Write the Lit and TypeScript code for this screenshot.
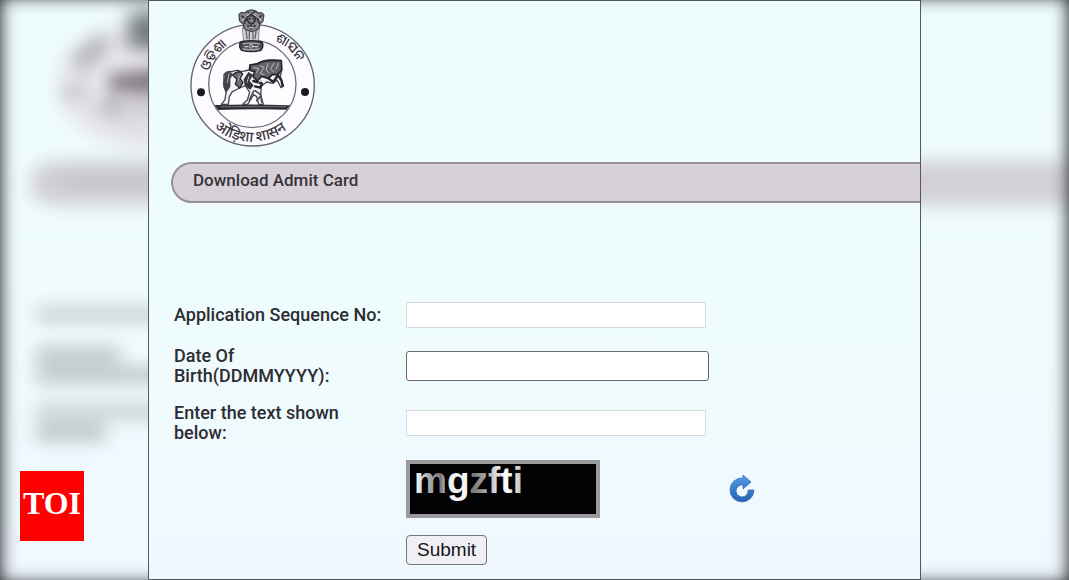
import { LitElement, html, svg, css } from "lit";
import { customElement } from "lit/decorators.js";

@customElement("state-emblem")
class StateEmblem extends LitElement {
  static styles = css`
    :host { display: block; width: 126px; height: 140px; }
    svg { display: block; width: 100%; height: 100%; }
    .seal { font: 500 40px "Noto Sans", "Noto Sans Devanagari", "Noto Sans Oriya", sans-serif; fill: #3a3740; }
    .hindi { font-size: 44px; }
  `;
  render() {
    return html`<svg viewBox="30 27 378 420" role="img" aria-label="Government of Odisha emblem">
      ${svg`
      <defs>
        <path id="arcLeft" d="M86 214 A142 142 0 0 1 153 130" />
        <path id="arcRight" d="M284 122 A150 150 0 0 1 366 211" />
        <path id="arcBottom" d="M94 376 A172 172 0 0 0 330 380" />
      </defs>
      <ellipse cx="218" cy="256" rx="185" ry="182" fill="#fdfbff" stroke="#66636b" stroke-width="4"/>
      <circle cx="217" cy="252" r="131" fill="#fdfcff" stroke="#706e76" stroke-width="4"/>
      <circle cx="63" cy="277" r="12" fill="#1c1a20"/>
      <circle cx="375" cy="276" r="12" fill="#1c1a20"/>
      <text class="seal"><textPath href="#arcLeft">ଓଡ଼ିଶା</textPath></text>
      <text class="seal"><textPath href="#arcRight">ଶାସନ</textPath></text>
      <text class="seal hindi" text-anchor="middle"><textPath href="#arcBottom" startOffset="50%">ओड़िशा शासन</textPath></text>
      <g stroke-linejoin="round" stroke-linecap="round">
        <path d="M188 82 L238 82 L235 126 L192 126 Z" fill="#d2d0d7" stroke="#8b8891" stroke-width="3"/>
        <path d="M178 52 Q174 38 188 38 Q198 40 200 34 Q214 25 229 34 Q232 41 242 38 Q256 42 249 54 Q252 66 240 70 Q240 88 226 92 Q213 96 203 91 Q190 88 190 71 Q176 66 178 52Z" fill="#8a878f" stroke="#46434c" stroke-width="4"/>
        <path d="M204 36 L213 45 L224 35 M185 48 L198 58 L193 70 M244 47 L232 58 L238 70 M202 51 Q214 42 227 52 Q226 68 214 72 Q201 67 202 51 M208 56h3 M219 56h3 M203 77 Q214 87 226 77 M213 74v12" fill="none" stroke="#36333b" stroke-width="5"/>
        <path d="M198 88 L201 116 M229 88 L225 116 M208 97 V117 M219 97 V117" fill="none" stroke="#66636c" stroke-width="4"/>
        <path d="M201 47 L209 40 M221 42 L228 48 M186 61 L194 54 M234 51 L243 60 M208 82h12" fill="none" stroke="#d8d6dc" stroke-width="3"/>
        <path d="M181 126 Q213 118 246 126 Q253 138 243 151 Q214 159 185 151 Q175 140 181 126Z" fill="#4b4851" stroke="#28252d" stroke-width="4"/>
        <path d="M190 132 Q213 127 238 132 M189 147 Q214 152 237 147" fill="none" stroke="#aaa8ae" stroke-width="4"/>
        <circle cx="214" cy="139" r="6" fill="#77737d" stroke="#e1dfe4" stroke-width="2"/>
        <path d="M194 140h10 M224 140h10" stroke="#d1ced5" stroke-width="4"/>
      </g>
      <path d="M104 315 Q218 311 330 316 L324 323 L320 329 Q220 326 114 330Z" fill="#302d34"/>
      <path d="M122 320 H318" stroke="#9b98a0" stroke-width="2"/>
      <g stroke-linejoin="round" stroke-linecap="round">
        <path d="M132 224 Q140 212 157 215 Q171 207 184 215 L207 210 L210 195 L231 191 Q252 178 276 180 L304 182 L305 210 L301 230 L310 258 L303 263 L291 240 L279 250 L260 246 L244 259 L242 284 L250 313 L236 313 L230 290 L221 284 L203 313 L188 313 L202 300 L209 277 L196 257 L179 264 L157 275 L148 290 L145 313 L124 313 L135 299 L139 273 L131 255Z" fill="#f5f3f8" stroke="#4a4750" stroke-width="4"/>
        <path d="M134 223 Q147 209 159 222 L151 237 L151 260 L138 280 L130 262Z" fill="#45424a"/>
        <path d="M158 225 Q177 207 188 222 L180 235 L189 247 L179 264 L166 253 L171 238Z" fill="#716e77" stroke="#27242b" stroke-width="4"/>
        <path d="M191 238 L205 216 L219 224 L209 243 L221 256 L211 269 L194 257Z" fill="#37343c"/>
        <path d="M210 195 L231 192 Q251 178 304 182 L305 210 L293 225 L278 223 L265 235 L245 229 L232 243 L219 230 L224 214 L210 211Z" fill="#65616b" stroke="#27242b" stroke-width="5"/>
        <path d="M220 243 L246 250 L240 263 L225 259 M292 224 L304 240 L308 258 M265 235 L280 246 L292 228" fill="none" stroke="#27242b" stroke-width="7"/>
        <path d="M225 272 L242 284 L245 306 M221 273 L208 300 M240 290 L230 302" fill="none" stroke="#4a4750" stroke-width="5"/>
        <path d="M220 203 L236 205 L229 219 M242 198 L252 202 L241 220 L252 224 M264 190 L258 210 L267 219 M282 190 L272 207 L281 216 M295 190 L288 208 M181 225 L174 240 M207 229 L201 247 M147 222 L142 247 M235 247 L246 241" fill="none" stroke="#b9b6be" stroke-width="3"/>
      </g>`}
    </svg>`;
  }
}

@customElement("page-backdrop")
class PageBackdrop extends LitElement {
  static styles = css`
    :host { display: block; overflow: hidden; background: #101416; }
    svg { display: block; width: 100%; height: 100%; filter: blur(9px); overflow: visible; }
  `;
  render() {
    return html`<svg viewBox="0 0 1069 580" preserveAspectRatio="none" aria-hidden="true">
      ${svg`
      <defs><linearGradient id="sky" x2="0" y2="1"><stop offset="0" stop-color="#effcfd"/><stop offset=".6" stop-color="#effbfd"/><stop offset="1" stop-color="#f0f8ff"/></linearGradient></defs>
      <rect y="-4" width="1069" height="588" fill="url(#sky)"/>
      <ellipse cx="145" cy="85" rx="85" ry="60" fill="#eeebf0" stroke="#bbbabf" stroke-width="2"/>
      <ellipse cx="145" cy="84" rx="60" ry="43" fill="#f4f2f6" stroke="#918f95" stroke-width="3"/>
      <path d="M75 64 L104 40" stroke="#aaa7ad" stroke-width="13"/>
      <circle cx="72" cy="92" r="7" fill="#aaa7ad"/>
      <path d="M105 74 L150 70 L185 62 V84 L145 95 L110 88Z" fill="#756f76"/>
      <path d="M104 108 H190 M116 90 L106 108" stroke="#777279" stroke-width="5"/>
      <rect x="129" y="12" width="34" height="38" fill="#757b7d"/>
      <path d="M1069 163 H60 Q32 163 32 183 Q32 203 60 203 H1069Z" fill="#d3d0d5" stroke="#b5b1b5" stroke-width="2"/>
      <g fill="#85878a" opacity=".55">
        <rect x="62" y="175" width="225" height="13" opacity=".35"/>
        <rect x="36" y="308" width="293" height="13" opacity=".8"/>
        <rect x="36" y="348" width="84" height="14"/><rect x="36" y="368" width="214" height="14"/>
        <rect x="36" y="405" width="232" height="13" opacity=".8"/><rect x="36" y="425" width="70" height="15"/>
      </g>`}
    </svg>`;
  }
}

@customElement("app-root")
class AppRoot extends LitElement {
  static styles = css`
    :host { display: block; font-family: Roboto, "Liberation Sans", sans-serif; color: #2d2c33; }
    * { box-sizing: border-box; }
    .stage { position: relative; display: grid; grid-template-columns: 148fr minmax(600px, 773fr) 148fr; min-height: 100vh; }
    .backdrop { position: absolute; inset: 0; }
    .panel { position: relative; grid-column: 2; border: 1px solid #50595d; padding: 8px 0 12px 22px; background: linear-gradient(#effcfd, #effcfd 55%, #f0f8ff); }
    .emblem { margin: 0 0 13px 19px; }
    .title { margin: 0; height: 41px; padding: 0 20px; border: 2px solid #969196; border-right: 0; border-radius: 21px 0 0 21px; background: #d7d1d7; font-size: 17px; font-weight: 500; line-height: 33px; color: #36343a; }
    .form { display: grid; grid-template-columns: 232px minmax(0, 1fr); grid-auto-rows: minmax(28px, auto); row-gap: 17px; align-items: center; margin: 98px 0 0 3px; font-size: 18px; font-weight: 500; line-height: 20px; }
    .label { max-width: 220px; }
    .field { width: 300px; height: 26px; border: 1px solid #d5dadb; background: #fff; font: 400 17px "Liberation Sans", sans-serif; padding: 2px 6px; }
    .date { width: 303px; height: 30px; border: 1px solid #66686b; border-radius: 3px; }
    .check { grid-column: 2; display: flex; align-items: center; gap: 128px; }
    .captcha { display: block; width: 194px; height: 58px; border: 4px solid #999a99; background: #020104; }
    .letters { font: 700 37px "Liberation Sans", sans-serif; }
    .refresh { width: 28px; height: 30px; padding: 0; border: 0; background: none; }
    .refresh svg { display: block; }
    .submit { grid-column: 2; justify-self: start; height: 30px; padding: 0 10px; border: 1px solid #737579; border-radius: 4px; background: #f0eff3; font: 400 19px "Liberation Sans", sans-serif; color: #17161a; }
    .brand { position: absolute; left: 20px; bottom: 39px; width: 64px; height: 70px; background: #f00; color: #fff; font: 700 32px/64px "Liberation Serif", serif; text-align: center; text-decoration: none; }
  `;
  render() {
    return html`
      <main class="stage">
        <page-backdrop class="backdrop"></page-backdrop>
        <section class="panel">
          <state-emblem class="emblem"></state-emblem>
          <h1 class="title">Download Admit Card</h1>
          <form class="form" @submit=${(e: Event) => e.preventDefault()}>
            <label class="label" for="seq">Application Sequence No:</label>
            <input class="field" id="seq" type="text" />
            <label class="label" for="dob">Date Of<br />Birth(DDMMYYYY):</label>
            <input class="field date" id="dob" type="text" />
            <label class="label" for="code">Enter the text shown<br />below:</label>
            <input class="field" id="code" type="text" />
            <div class="check">
              <svg class="captcha" viewBox="0 0 186 50">
                ${svg`<defs>
                  <linearGradient id="metal" gradientUnits="userSpaceOnUse" x1="5" x2="113" y1="0" y2="0">
                    <stop offset="0" stop-color="#fff"/><stop offset=".1" stop-color="#bbb"/><stop offset=".24" stop-color="#777"/>
                    <stop offset=".31" stop-color="#eee"/><stop offset=".48" stop-color="#f5f5f5"/><stop offset=".53" stop-color="#777"/>
                    <stop offset=".67" stop-color="#aaa"/><stop offset=".75" stop-color="#ddd"/><stop offset=".85" stop-color="#fff"/><stop offset="1" stop-color="#bbb"/>
                  </linearGradient></defs>
                  <text class="letters" x="4" y="29" fill="url(#metal)">mgzfti</text>`}
              </svg>
              <button class="refresh" type="button" aria-label="Refresh code">
                <svg width="28" height="30" viewBox="0 0 28 30">
                  ${svg`<defs><linearGradient id="blue" x2="0" y2="1"><stop offset="0" stop-color="#5a9ae4"/><stop offset=".5" stop-color="#397fd0"/><stop offset="1" stop-color="#2862b4"/></linearGradient></defs>
                  <path d="M15 1 L23 8 L15 15 V11 A6 6 0 1 0 20 16 H26 A12 12 0 1 1 15 4Z" fill="url(#blue)" stroke="#3673bd" stroke-width=".8" stroke-linejoin="round"/>`}
                </svg>
              </button>
            </div>
            <button class="submit" type="submit">Submit</button>
          </form>
        </section>
        <a class="brand" href="#" aria-label="TOI">TOI</a>
      </main>
    `;
  }
}
